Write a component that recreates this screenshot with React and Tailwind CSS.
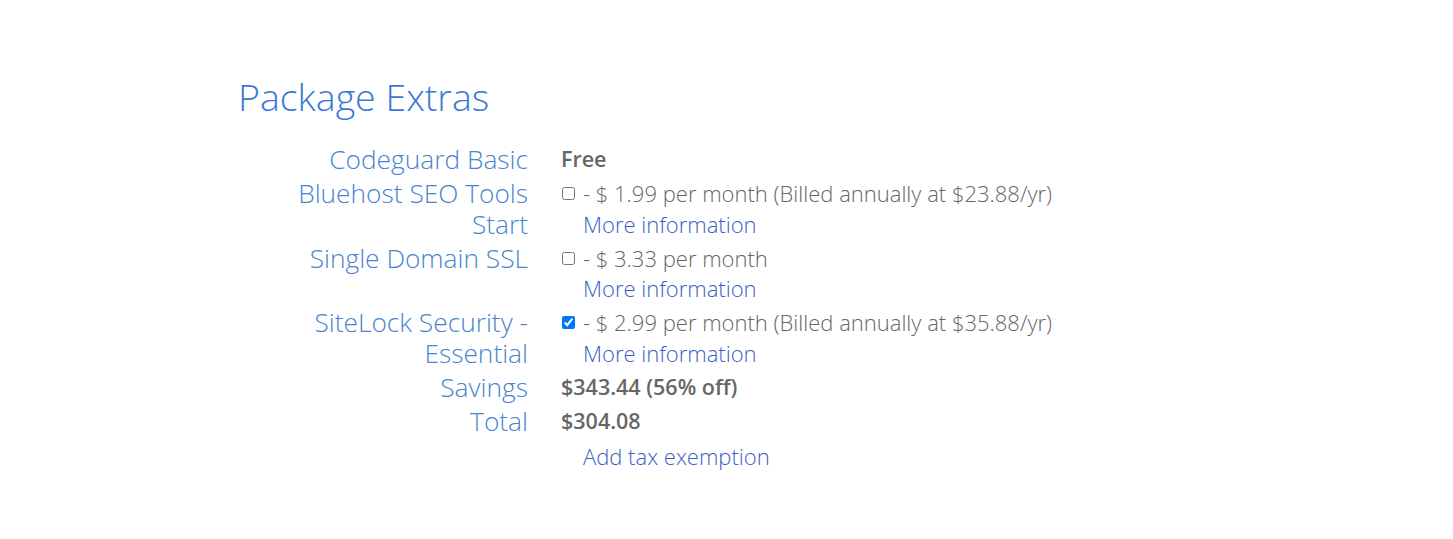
const ROWS = [
  { label: ['Codeguard Basic'], value: <span className="font-semibold">Free</span> },
  {
    label: ['Bluehost SEO Tools', 'Start'],
    check: false,
    price: '- $ 1.99 per month (Billed annually at $23.88/yr)',
    link: 'More information',
  },
  { label: ['Single Domain SSL'], check: false, price: '- $ 3.33 per month', link: 'More information' },
  {
    label: ['SiteLock Security -', 'Essential'],
    check: true,
    price: '- $ 2.99 per month (Billed annually at $35.88/yr)',
    link: 'More information',
  },
  { label: ['Savings'], value: <span className="font-semibold">$343.44 (56% off)</span> },
  { label: ['Total'], value: <span className="font-semibold">$304.08</span> },
  { label: [], link: 'Add tax exemption' },
];

export default function App() {
  return (
    <div className="min-h-[539px] bg-white pt-[70px] pl-[238px]" style={{ fontFamily: '"Open Sans", "Liberation Sans", sans-serif' }}>
      <h1 className="text-[37.5px] leading-[54px] font-light text-[#3a78d6]">Package Extras</h1>
      <div className="mt-[20px] flex flex-col gap-[4px]">
        {ROWS.map((row, i) => (
          <div key={i} className="flex items-start">
            <div className="w-[290px] shrink-0 text-right text-[26.3px] leading-[30.3px] font-light text-[#4a84cf]">
              {row.label.map((l) => (
                <div key={l}>{l}</div>
              ))}
            </div>
            <div className="ml-[33px] text-[22px] leading-[30.3px] font-light text-[#666666]">
              {row.value ? (
                <div className="text-[21.5px]">{row.value}</div>
              ) : row.price ? (
                <div className="flex items-center">
                  <input
                    type="checkbox"
                    defaultChecked={row.check}
                    className="ml-[1px] mr-[8px] h-[13px] w-[13px]"
                  />
                  <span>{row.price}</span>
                </div>
              ) : null}
              {row.link && (
                <a href="#" className="block pl-[22px] text-[#3d5ec8]">
                  {row.link}
                </a>
              )}
            </div>
          </div>
        ))}
      </div>
    </div>
  );
}
